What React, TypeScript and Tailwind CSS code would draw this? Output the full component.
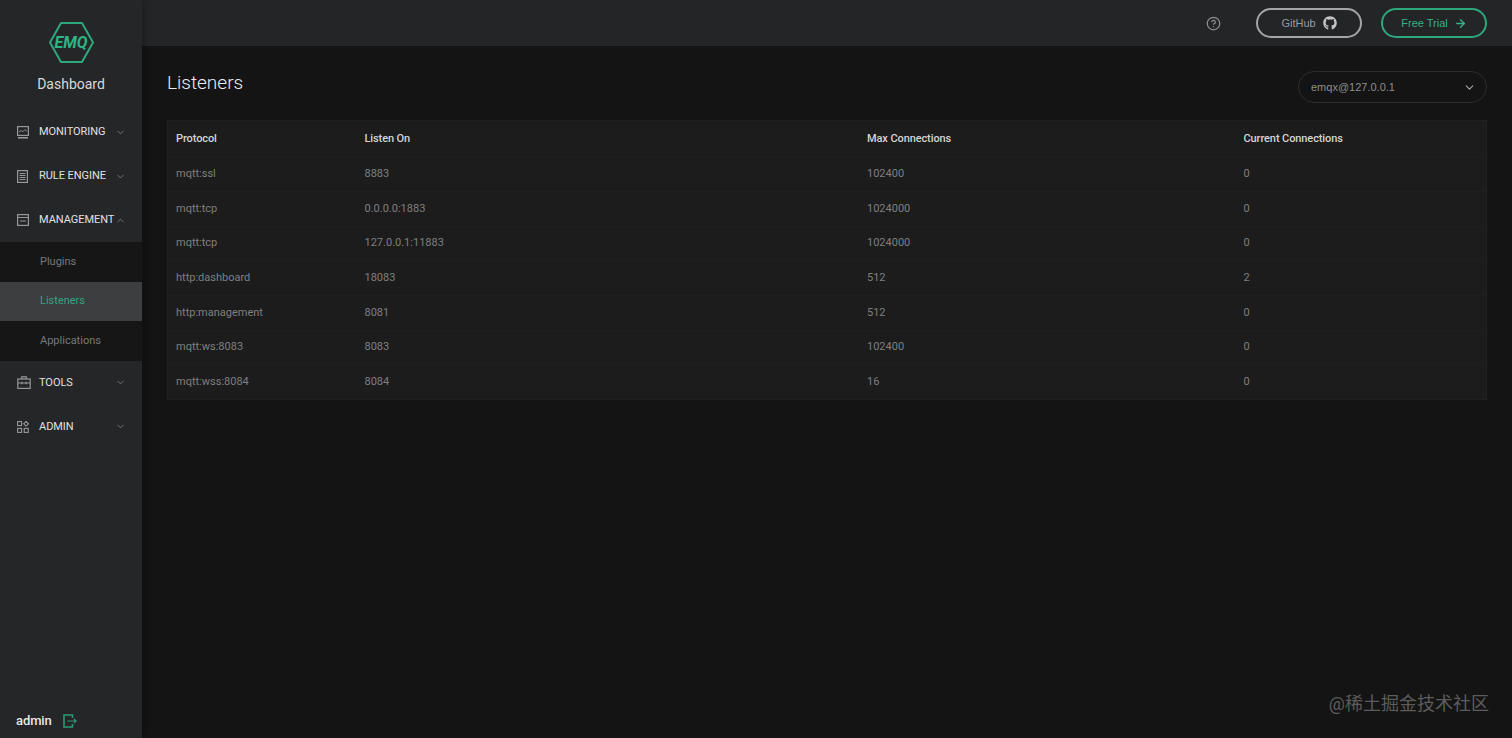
import { ChevronDown, ChevronUp, HelpCircle, ArrowRight } from 'lucide-react'
import { FaGithub } from 'react-icons/fa'
import type { ReactNode } from 'react'

const rows = [
  ['mqtt:ssl', '8883', '102400', '0'],
  ['mqtt:tcp', '0.0.0.0:1883', '1024000', '0'],
  ['mqtt:tcp', '127.0.0.1:11883', '1024000', '0'],
  ['http:dashboard', '18083', '512', '2'],
  ['http:management', '8081', '512', '0'],
  ['mqtt:ws:8083', '8083', '102400', '0'],
  ['mqtt:wss:8084', '8084', '16', '0'],
]

const columns = ['Protocol', 'Listen On', 'Max Connections', 'Current Connections']

function MonitorIcon() {
  return (
    <svg width="12" height="13" viewBox="0 0 12 13" fill="none" stroke="currentColor" strokeWidth="1.2">
      <rect x="0.6" y="0.6" width="10.8" height="8.800" />
      <path d="M2 6l2.200-1.500 1.800 1.200 1.800-2 2.200 1.600" strokeWidth="0.9" />
      <path d="M1 11.800h10" strokeWidth="1.600" />
    </svg>
  )
}

function RuleIcon() {
  return (
    <svg width="11" height="13" viewBox="0 0 11 13" fill="none" stroke="currentColor" strokeWidth="1.2">
      <rect x="0.6" y="0.6" width="9.800" height="11.800" />
      <path d="M2.500 3.500h6M2.500 5.500h6M2.500 7.500h6M2.500 9.500h6" strokeWidth="1" />
    </svg>
  )
}

function ManageIcon() {
  return (
    <svg width="12" height="12" viewBox="0 0 12 12" fill="none" stroke="currentColor" strokeWidth="1.2">
      <rect x="0.6" y="0.6" width="10.800" height="10.800" />
      <path d="M0.600 3.500h10.800M3 7h6" />
    </svg>
  )
}

function ToolsIcon() {
  return (
    <svg width="14" height="13" viewBox="0 0 14 13" fill="none" stroke="currentColor" strokeWidth="1.2">
      <rect x="0.8" y="3" width="12.400" height="9.400" />
      <path d="M4.700 3V0.800h4.600V3M0.800 7h12.400M5 5.800v2.400M9 5.800v2.400" />
    </svg>
  )
}

function AdminIcon() {
  return (
    <svg width="12" height="12" viewBox="0 0 12 12" fill="none" stroke="currentColor" strokeWidth="1.100">
      <rect x="0.6" y="0.6" width="4" height="4" />
      <path d="M9 0.500l2.400 2.300L9 5.100 6.700 2.800z" />
      <rect x="0.6" y="7.400" width="4" height="4" />
      <rect x="7.200" y="7.400" width="4" height="4" />
    </svg>
  )
}

function LogoutIcon() {
  return (
    <svg width="14" height="14" viewBox="0 0 14 14" fill="none" stroke="#2a9a72" strokeWidth="1.600">
      <path d="M9.500 4V1H1v12h8.500v-3" />
      <path d="M4.500 7h9M11 5l2.200 2L11 9" strokeWidth="1.200" />
    </svg>
  )
}

function MenuItem({ icon, label, open }: { icon: ReactNode; label: string; open?: boolean }) {
  return (
    <div className="flex h-11 items-center pl-[17px] pr-[16px] text-[#e0e0e2]">
      <span className="flex w-[22px] shrink-0 text-[#98989b]">{icon}</span>
      <span className="flex-1 whitespace-nowrap text-[11px] tracking-[-0.05px]">{label}</span>
      {open ? (
        <ChevronUp size={11} className="shrink-0 text-[#77787b]" />
      ) : (
        <ChevronDown size={11} className="shrink-0 text-[#77787b]" />
      )}
    </div>
  )
}

export default function App() {
  return (
    <div className="relative flex h-[738px] w-[1512px] overflow-hidden bg-[#141414] font-['Roboto',sans-serif]">
      {/* Sidebar */}
      <aside className="relative z-10 flex w-[142px] shrink-0 flex-col bg-[#252628] shadow-[2px_0_8px_rgba(0,0,0,0.25)]">
        <div className="flex h-[110px] flex-col items-center pt-[21px]">
          <div className="relative flex h-[43px] w-[47px] items-center justify-center">
            <svg className="absolute inset-0" width="47" height="43" viewBox="0 0 47 43" fill="none" stroke="#2fa77d" strokeWidth="2" strokeLinejoin="round">
              <path d="M13 2h21l11 19.500-11 19.500H13L2 21.500z" />
            </svg>
            <span className="relative text-[16px] font-bold italic text-[#2fb585]">EMQ</span>
          </div>
          <div className="mt-[9px] text-[14px] leading-[22px] text-[#d8d8da]">Dashboard</div>
        </div>

        <MenuItem icon={<MonitorIcon />} label="MONITORING" />
        <MenuItem icon={<RuleIcon />} label="RULE ENGINE" />
        <MenuItem icon={<ManageIcon />} label="MANAGEMENT" open />

        <div className="bg-[#161616] text-[11px] text-[#77787a]">
          <div className="flex h-[39.600px] items-center pl-[40px]">Plugins</div>
          <div className="flex h-[39.600px] items-center bg-[#3c3e40] pl-[40px] text-[#34a37c]">Listeners</div>
          <div className="flex h-[39.600px] items-center pl-[40px]">Applications</div>
        </div>

        <MenuItem icon={<ToolsIcon />} label="TOOLS" />
        <MenuItem icon={<AdminIcon />} label="ADMIN" />

        <div className="mt-auto flex h-[34px] items-center gap-[11px] pl-[16px]">
          <span className="text-[13px] font-medium leading-[18px] tracking-[-0.1px] text-[#e8e8e8]">admin</span>
          <LogoutIcon />
        </div>
      </aside>

      <div className="flex min-w-0 flex-1 flex-col">
        {/* Header */}
        <header className="flex h-[46px] items-center justify-end bg-[#242527] pr-[25px] font-['Liberation_Sans',sans-serif]">
          <HelpCircle size={15} className="mr-[35px] text-[#8f8f92]" />
          <div className="mr-[19px] flex h-[30px] w-[106px] items-center justify-center gap-[7px] rounded-full border-2 border-[#a5a5a8] text-[11px] text-[#9a9a9d]">
            GitHub
            <FaGithub size={14} className="text-[#c4c4c6]" />
          </div>
          <div className="flex h-[30px] w-[106px] items-center justify-center gap-[6px] rounded-full border-2 border-[#2fa77d] text-[11px] text-[#35b186]">
            Free Trial
            <ArrowRight size={13} strokeWidth={2.5} />
          </div>
        </header>

        {/* Content */}
        <main className="px-[25px]">
          <div className="flex h-[74px] items-start justify-between pt-[25px]">
            <h1 className="text-[19px] font-light leading-[24px] text-[#ececee]">Listeners</h1>
            <div className="flex h-[32px] w-[189px] items-center justify-between rounded-full border border-[#2b2c2e] pl-[12px] pr-[10px] font-['Liberation_Sans',sans-serif] text-[11px] text-[#8d8d8f]">
              emqx@127.0.0.1
              <ChevronDown size={13} className="text-[#a8a8aa]" />
            </div>
          </div>

          <div className="border border-[#202021] bg-[#1c1c1d]">
            <div className="grid h-[35.500px] grid-cols-[188.500px_502.500px_376.500px_1fr] items-center text-[11px] font-medium tracking-[-0.1px] text-[#d4d4d4]">
              {columns.map((c) => (
                <div key={c} className="pl-[8px]">{c}</div>
              ))}
            </div>
            {rows.map((row, i) => (
              <div
                key={i}
                className="grid h-[34.650px] grid-cols-[188.500px_502.500px_376.500px_1fr] items-center border-t border-[#1f1f20] text-[11px] text-[#7f7f7f]"
              >
                {row.map((cell, j) => (
                  <div key={j} className="pl-[8px]">{cell}</div>
                ))}
              </div>
            ))}
          </div>
        </main>
      </div>

      {/* Watermark */}
      <div className="absolute bottom-[22px] right-[23px] font-['Roboto','Noto_Sans_CJK_SC',sans-serif] text-[18px] leading-[24px] text-[#5c5c5c]">
        @稀土掘金技术社区
      </div>
    </div>
  )
}
